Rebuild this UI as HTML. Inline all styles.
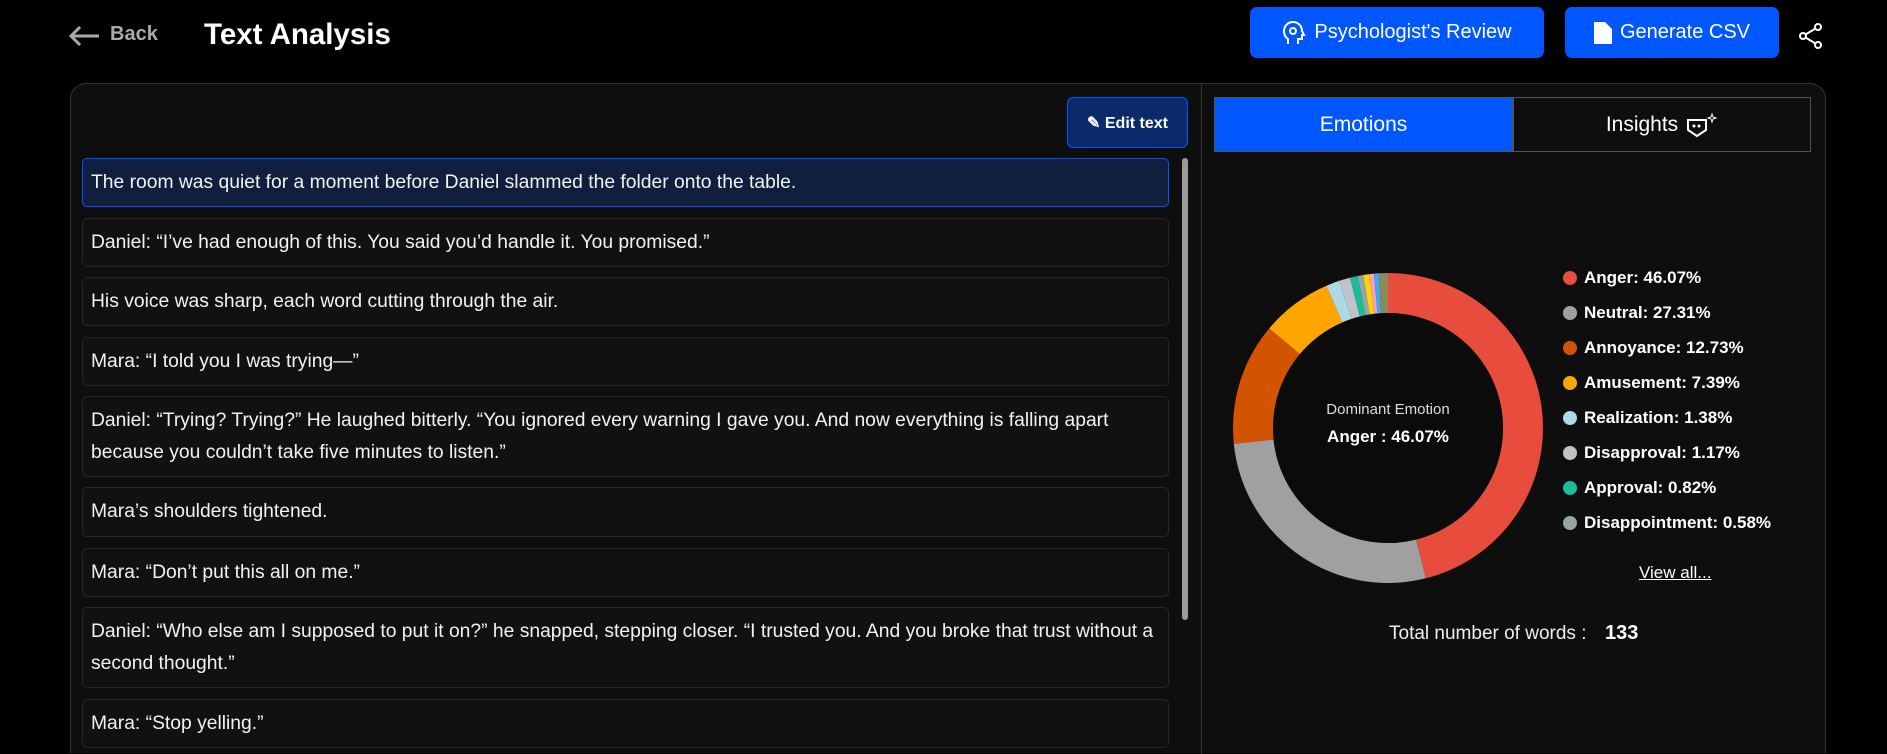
<!DOCTYPE html>
<html><head><meta charset="utf-8"><style>
*{box-sizing:border-box;margin:0;padding:0}
html,body{width:1887px;height:753px;background:#000;overflow:hidden;font-family:"Liberation Sans",sans-serif;color:#fff}
.abs{position:absolute}
.btn{position:absolute;top:7px;height:51px;background:#0057ff;border-radius:7px;display:flex;align-items:center;justify-content:center;font-size:20px;font-weight:500;gap:8px}
.panel{position:absolute;left:70px;top:83px;width:1756px;height:670px;border:1.5px solid #333;border-bottom:none;border-radius:16px 16px 0 0;background:#0e0e0e}
.row{position:absolute;left:82px;width:1087px;background:#111;border:1px solid #262626;border-radius:5px;font-size:19.3px;line-height:32px;padding:8px 8px;color:#f2f2f2}
.leg{position:absolute;left:1563px;font-size:17px;font-weight:600;display:flex;align-items:center}
.leg i{display:inline-block;width:14px;height:14px;border-radius:50%;margin-right:7px}
</style></head><body>
<svg class="abs" style="left:68px;top:25px" width="32" height="22" viewBox="0 0 32 22"><path d="M31 11H3M12 2L3 11l9 9" stroke="#aaa" stroke-width="3" fill="none"/></svg>
<div class="abs" style="left:110px;top:23px;font-size:20px;color:#aaa;font-weight:600">Back</div>
<div class="abs" style="left:204px;top:18px;font-size:29.5px;font-weight:600">Text Analysis</div>
<div class="btn" style="left:1250px;width:294px"><svg width="24" height="26" viewBox="0 0 24 26"><path d="M6 24v-5C3 17 2 14 2 11 2 6 6 2 11 2s9 4 9 9l2 4h-2v4h-4v5" stroke="#fff" stroke-width="2" fill="none"/><circle cx="11" cy="11" r="3" stroke="#fff" stroke-width="2" fill="none"/></svg>Psychologist's Review</div>
<div class="btn" style="left:1565px;width:214px"><svg width="18" height="22" viewBox="0 0 18 22"><path d="M0 0h11l7 7v15H0z" fill="#fff"/></svg>Generate CSV</div>
<svg class="abs" style="left:1798px;top:23px" width="26" height="26" viewBox="0 0 26 26"><g stroke="#fff" stroke-width="2" fill="none"><circle cx="20" cy="4" r="3"/><circle cx="5" cy="13" r="3"/><circle cx="20" cy="22" r="3"/><path d="M7.5 11.5l10-6M7.5 14.5l10 6"/></g></svg>
<div class="panel"></div>
<div class="abs" style="left:1201px;top:84px;width:1px;height:670px;background:#333"></div>
<div class="abs" style="left:1067px;top:97px;width:121px;height:51px;background:#0a2a6b;border:1.5px solid #0057ff;border-radius:6px;font-size:16px;font-weight:600;display:flex;align-items:center;justify-content:center">&#9998;&nbsp;Edit text</div>
<div class="abs" style="left:1182px;top:158px;width:6px;height:462px;background:#9a9a9a;border-radius:3px"></div>
<div class="row" style="top:158px;height:49px;background:#0f1f3d;border-color:#0057ff">The room was quiet for a moment before Daniel slammed the folder onto the table.</div>
<div class="row" style="top:218px;height:49px">Daniel: “I’ve had enough of this. You said you’d handle it. You promised.”</div>
<div class="row" style="top:277px;height:49px">His voice was sharp, each word cutting through the air.</div>
<div class="row" style="top:337px;height:49px">Mara: “I told you I was trying—”</div>
<div class="row" style="top:396px;height:81px">Daniel: “Trying? Trying?” He laughed bitterly. “You ignored every warning I gave you. And now everything is falling apart because you couldn’t take five minutes to listen.”</div>
<div class="row" style="top:487px;height:50px">Mara’s shoulders tightened.</div>
<div class="row" style="top:548px;height:49px">Mara: “Don’t put this all on me.”</div>
<div class="row" style="top:607px;height:81px">Daniel: “Who else am I supposed to put it on?” he snapped, stepping closer. “I trusted you. And you broke that trust without a second thought.”</div>
<div class="row" style="top:699px;height:49px">Mara: “Stop yelling.”</div>
<div class="abs" style="left:1214px;top:97px;width:299px;height:55px;background:#0057ff;border:1px solid #555;font-size:21px;display:flex;align-items:center;justify-content:center">Emotions</div>
<div class="abs" style="left:1513px;top:97px;width:298px;height:55px;border:1.5px solid #555;font-size:21px;display:flex;align-items:center;justify-content:center;gap:8px">Insights <svg width="32" height="26" viewBox="0 0 32 26"><path d="M2 8h18v10l-9 6-9-6z" stroke="#fff" stroke-width="2" fill="none"/><circle cx="8" cy="14" r="1.5" fill="#fff"/><circle cx="13" cy="14" r="1.5" fill="#fff"/><path d="M26 2l1 3 3 1-3 1-1 3-1-3-3-1 3-1z" stroke="#fff" stroke-width="1" fill="none"/></svg></div>
<svg class="abs" style="left:1233px;top:273px" width="310" height="310" viewBox="0 0 310 310">
<g transform="rotate(-90 155 155)" fill="none" stroke-width="40">
<circle cx="155" cy="155" r="135" pathLength="100" stroke="#e74c3c" stroke-dasharray="46.07 100"/>
<circle cx="155" cy="155" r="135" pathLength="100" stroke="#a0a0a0" stroke-dasharray="27.31 100" stroke-dashoffset="-46.07"/>
<circle cx="155" cy="155" r="135" pathLength="100" stroke="#d35400" stroke-dasharray="12.73 100" stroke-dashoffset="-73.38"/>
<circle cx="155" cy="155" r="135" pathLength="100" stroke="#ffa500" stroke-dasharray="7.39 100" stroke-dashoffset="-86.11"/>
<circle cx="155" cy="155" r="135" pathLength="100" stroke="#add8e6" stroke-dasharray="1.38 100" stroke-dashoffset="-93.5"/>
<circle cx="155" cy="155" r="135" pathLength="100" stroke="#c0c4c8" stroke-dasharray="1.17 100" stroke-dashoffset="-94.88"/>
<circle cx="155" cy="155" r="135" pathLength="100" stroke="#1abc9c" stroke-dasharray="0.82 100" stroke-dashoffset="-96.05"/>
<circle cx="155" cy="155" r="135" pathLength="100" stroke="#95a5a6" stroke-dasharray="0.58 100" stroke-dashoffset="-96.87"/>
<circle cx="155" cy="155" r="135" pathLength="100" stroke="#ffd700" stroke-dasharray="0.6 100" stroke-dashoffset="-97.45"/>
<circle cx="155" cy="155" r="135" pathLength="100" stroke="#ff9fb0" stroke-dasharray="0.5 100" stroke-dashoffset="-98.05"/>
<circle cx="155" cy="155" r="135" pathLength="100" stroke="#3fa9f5" stroke-dasharray="0.5 100" stroke-dashoffset="-98.55"/>
<circle cx="155" cy="155" r="135" pathLength="100" stroke="#8a8a5a" stroke-dasharray="0.95 100" stroke-dashoffset="-99.05"/>
</g>
<circle cx="155" cy="155" r="115" fill="#0b0b0b"/>
</svg>
<div class="abs" style="left:1288px;top:401px;width:200px;text-align:center;font-size:15px;color:#ddd">Dominant Emotion</div>
<div class="abs" style="left:1288px;top:427px;width:200px;text-align:center;font-size:17px;font-weight:600">Anger : 46.07%</div>
<div class="leg" style="top:268px"><i style="background:#e74c3c"></i>Anger: 46.07%</div>
<div class="leg" style="top:303px"><i style="background:#a0a0a0"></i>Neutral: 27.31%</div>
<div class="leg" style="top:338px"><i style="background:#d35400"></i>Annoyance: 12.73%</div>
<div class="leg" style="top:373px"><i style="background:#ffa500"></i>Amusement: 7.39%</div>
<div class="leg" style="top:408px"><i style="background:#add8e6"></i>Realization: 1.38%</div>
<div class="leg" style="top:443px"><i style="background:#c0c4c8"></i>Disapproval: 1.17%</div>
<div class="leg" style="top:478px"><i style="background:#1abc9c"></i>Approval: 0.82%</div>
<div class="leg" style="top:513px"><i style="background:#95a5a6"></i>Disappointment: 0.58%</div>
<div class="abs" style="left:1639px;top:563px;font-size:17px;text-decoration:underline">View all...</div>
<div class="abs" style="left:1389px;top:623px;font-size:19px;color:#eee">Total number of words :</div>
<div class="abs" style="left:1605px;top:622px;font-size:20px;font-weight:600">133</div>
</body></html>
